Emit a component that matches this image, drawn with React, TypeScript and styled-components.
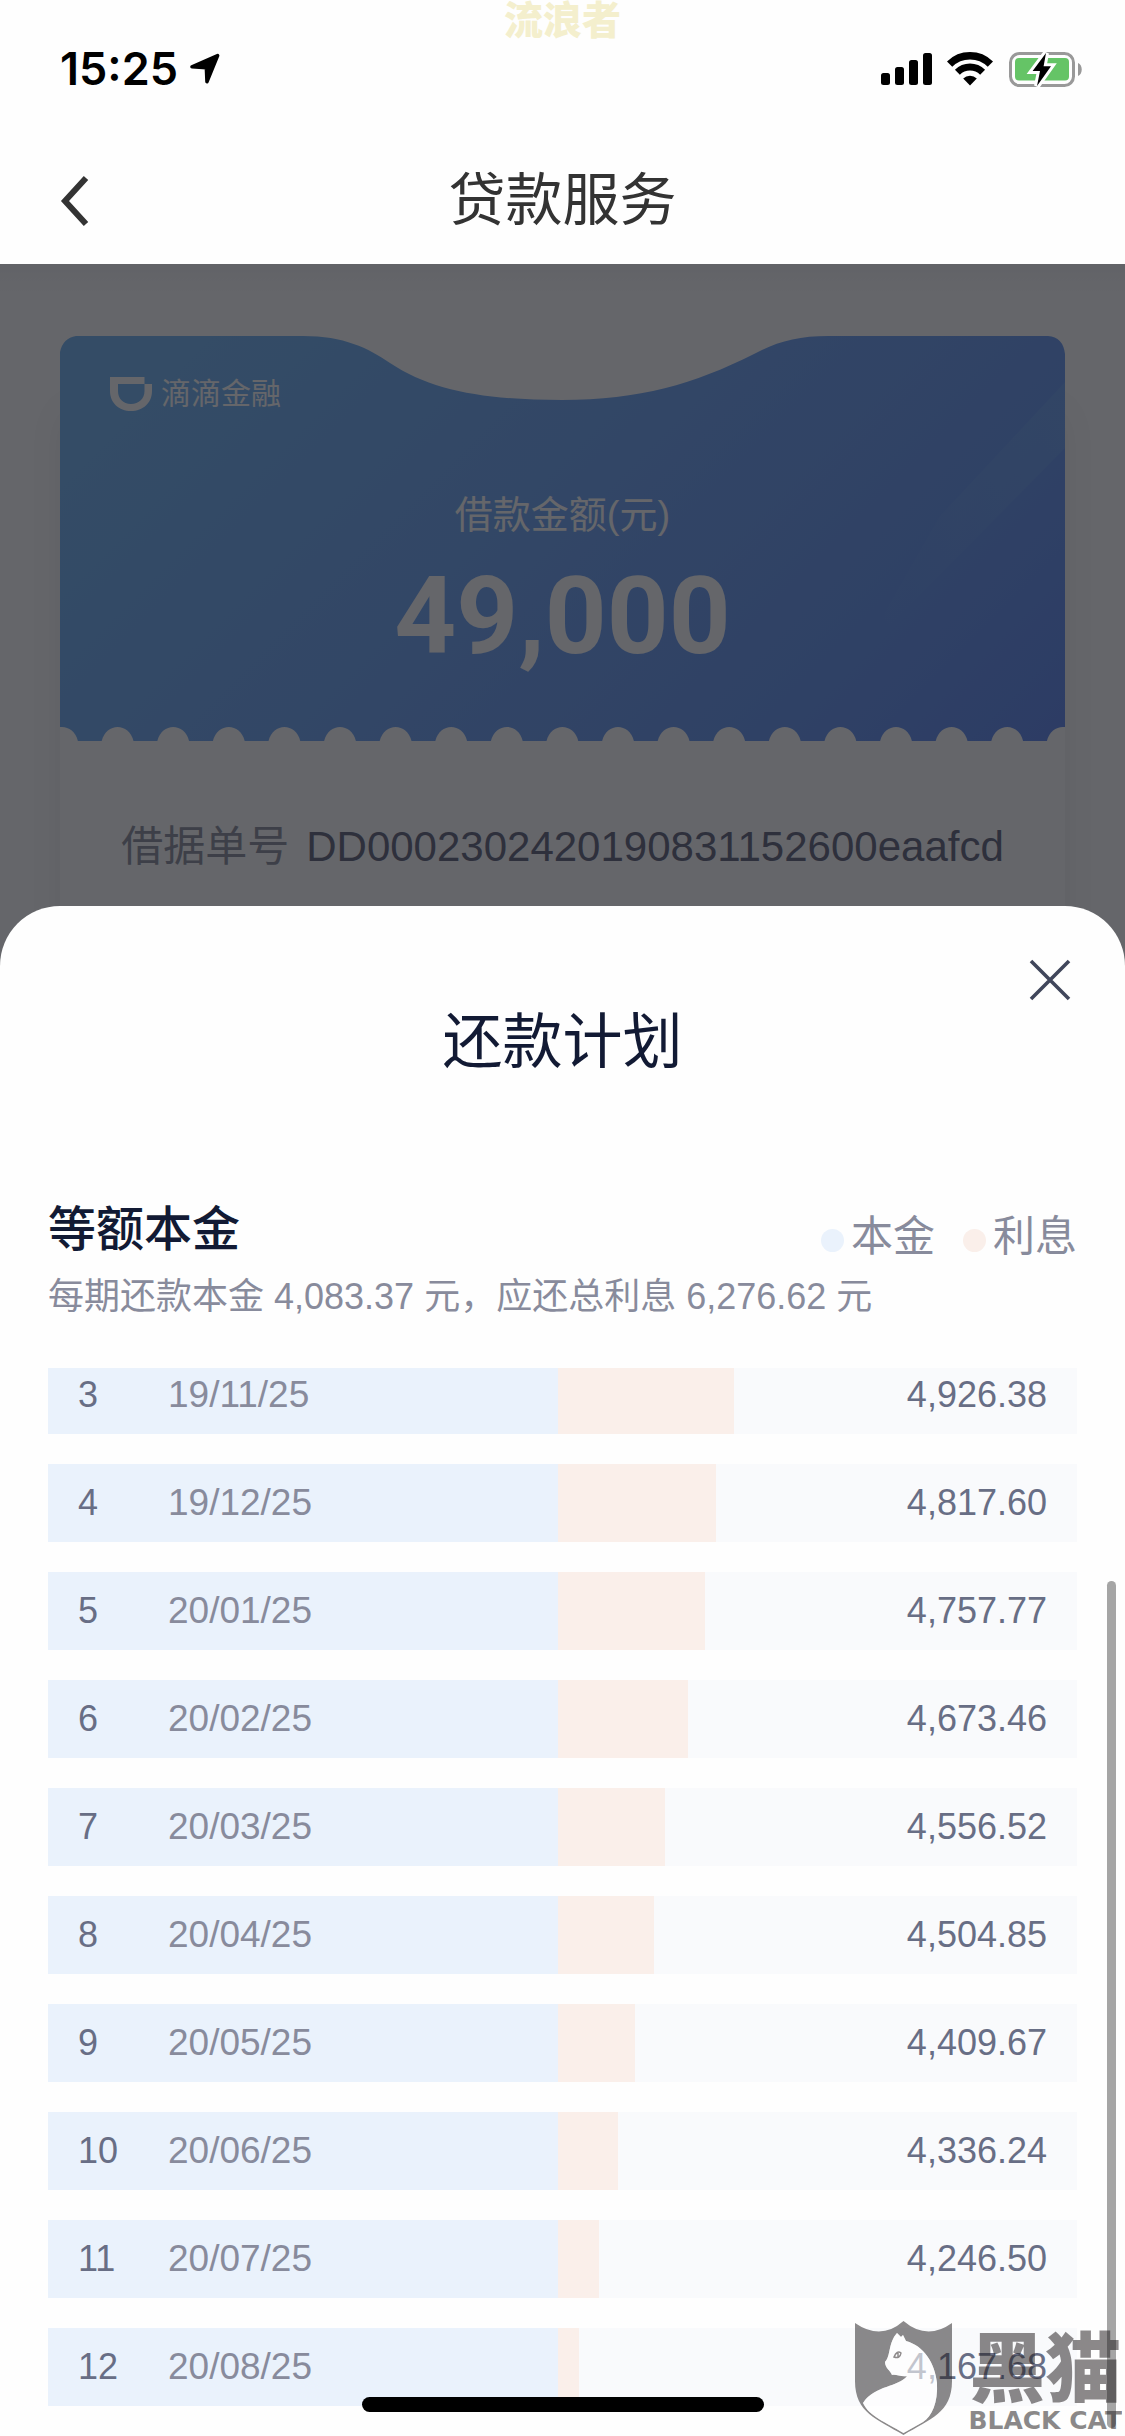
import React from "react";
import styled, { createGlobalStyle } from "styled-components";

const GlobalStyle = createGlobalStyle`
  *, *::before, *::after { box-sizing: border-box; }
  body {
    margin: 0;
    background: #fff;
    font-family: "Liberation Sans", "Noto Sans CJK SC", sans-serif;
  }
  h1, h2, h3, p, dl, dd { margin: 0; font-weight: 400; }
  button { padding: 0; border: 0; background: none; font: inherit; cursor: pointer; }
  svg { display: block; }
`;

const Screen = styled.div`
  position: relative;
  display: flex;
  flex-direction: column;
  min-height: 100vh;
  overflow: hidden;
`;

const Header = styled.header`
  position: relative;
  background: #fefefe;
`;

const UserMark = styled.span`
  position: absolute;
  top: -1px;
  left: 0;
  right: 0;
  text-align: center;
  color: #f4efcd;
  font-family: "Noto Sans CJK SC", sans-serif;
  font-size: 39px;
  font-weight: 900;
  line-height: 36px;
`;

const StatusBar = styled.div`
  display: flex;
  align-items: center;
  justify-content: space-between;
  height: 132px;
  padding: 6px 42px 0 60px;
`;

const StatusGroup = styled.div`
  display: flex;
  align-items: center;
  gap: ${(p: { $gap: number }) => p.$gap}px;
`;

const Clock = styled.span`
  color: #000;
  font-family: Inter, sans-serif;
  font-size: 45px;
  font-weight: 600;
  line-height: 54px;
`;

const NavBar = styled.div`
  display: grid;
  grid-template-columns: 60px 1fr 60px;
  align-items: center;
  height: 132px;
  padding: 4px 60px 0;
`;

const NavTitle = styled.h1`
  text-align: center;
  color: #333;
  font-size: 57px;
  line-height: 80px;
`;

const Stage = styled.main`
  flex: 1;
  display: grid;
  grid-template-columns: minmax(0, 1fr);
`;

const Layer = styled.div`
  grid-area: 1 / 1;
`;

const LoanPage = styled(Layer)`
  padding: 72px 60px 0;
  background: linear-gradient(#f4f4f5, #fcfcfc 28px);
`;

const Backdrop = styled(Layer)`
  background: rgba(0, 2, 8, 0.6);
`;

const LoanCard = styled.section`
  border-radius: 20px;
  box-shadow: 0 72px 36px rgba(0, 0, 0, 0.06);
`;

const Ticket = styled.div`
  display: grid;
`;

const TicketArt = styled.svg`
  grid-area: 1 / 1;
  width: 100%;
  height: 100%;
`;

const TicketFace = styled.div`
  grid-area: 1 / 1;
  display: flex;
  flex-direction: column;
  padding: 36px 50px 70px;
  color: #fcfcfc;
`;

const Brand = styled.div`
  display: flex;
  align-items: center;
  gap: 8px;
  font-size: 30px;
  line-height: 44px;
`;

const LoanLabel = styled.p`
  margin-top: 71px;
  text-align: center;
  font-size: 38px;
  line-height: 56px;
`;

const LoanAmount = styled.p`
  margin-top: 18px;
  text-align: center;
  font-family: Roboto, "Liberation Sans", sans-serif;
  font-size: 108px;
  font-weight: 700;
  line-height: 110px;
`;

const LoanInfo = styled.dl`
  display: flex;
  justify-content: center;
  gap: 17px;
  min-height: 300px;
  padding: 76px 60px;
  background: #fcfcfc;
  font-size: 42px;
  line-height: 60px;
`;

const InfoLabel = styled.dt`
  color: #9a9ca8;
  white-space: nowrap;
`;

const InfoValue = styled.dd`
  color: #73768a;
`;

const Sheet = styled.section`
  position: relative;
  grid-area: 1 / 1;
  align-self: end;
  padding-bottom: 30px;
  border-radius: 60px 60px 0 0;
  background: #fefefe;
`;

const SheetTop = styled.div`
  display: flex;
  justify-content: flex-end;
  padding: 52px 53px 0;
`;

const SheetTitle = styled.h2`
  margin-top: 10px;
  text-align: center;
  color: #121a34;
  font-size: 60px;
  line-height: 62px;
`;

const SheetBody = styled.div`
  padding: 0 48px;
`;

const PlanHead = styled.div`
  display: flex;
  align-items: flex-end;
  justify-content: space-between;
  margin-top: 126px;
`;

const PlanName = styled.h3`
  color: #121a34;
  font-size: 48px;
  font-weight: 500;
  line-height: 60px;
`;

const Legend = styled.div`
  display: flex;
  gap: 28px;
`;

const LegendItem = styled.span`
  display: flex;
  align-items: center;
  gap: 7px;
  color: #888b9c;
  font-size: 42px;
  line-height: 46px;

  &::before {
    content: "";
    width: 23px;
    height: 23px;
    margin-top: 6px;
    border-radius: 50%;
    background: ${(p: { $color: string }) => p.$color};
  }
`;

const PlanSummary = styled.p`
  margin-top: 12px;
  color: #888b9c;
  font-size: 36px;
  line-height: 50px;
`;

const ScheduleView = styled.div`
  margin-top: 46px;
  overflow: hidden;
`;

const Schedule = styled.table`
  display: block;
  margin-top: -12px;
`;

const ScheduleBody = styled.tbody`
  display: flex;
  flex-direction: column;
  gap: 30px;
`;

const PRINCIPAL = "#eaf2fc";
const INTEREST = "#faefea";
const PRINCIPAL_SHARE = 49.6;

const ScheduleRow = styled.tr<{ $interest: number }>`
  display: grid;
  grid-template-columns: 90px 1fr auto;
  align-items: center;
  height: 78px;
  padding: 0 30px;
  background: linear-gradient(
    to right,
    ${PRINCIPAL} 0 ${PRINCIPAL_SHARE}%,
    ${INTEREST} 0 ${(p) => PRINCIPAL_SHARE + p.$interest}%,
    #f9fafc 0
  );
`;

const Cell = styled.td`
  padding: 0;
  color: #686e85;
  font-size: 36px;
  line-height: 42px;
`;

const DateCell = styled(Cell)`
  color: #888b9c;
  font-size: 37px;
`;

const ScrollThumb = styled.div`
  position: absolute;
  top: 675px;
  right: 9px;
  bottom: 8px;
  width: 9px;
  border-radius: 5px;
  background: #a5a5a5;
`;

const HomeIndicator = styled.div`
  position: absolute;
  bottom: 24px;
  left: 50%;
  width: 402px;
  height: 15px;
  margin-left: -201px;
  border-radius: 8px;
  background: #000;
`;

const SourceMark = styled.div`
  position: absolute;
  right: 3px;
  bottom: 0;
  display: flex;
  align-items: flex-end;
  gap: 15px;
  color: #231e20;
`;

const SourceText = styled.div`
  display: flex;
  flex-direction: column;
  align-items: center;
  opacity: 0.52;
`;

const SourceName = styled.span`
  margin-bottom: 4px;
  font-family: "Noto Sans CJK SC", sans-serif;
  font-size: 76px;
  font-weight: 900;
  line-height: 76px;
`;

const SourceLatin = styled.span`
  font-family: "DejaVu Sans", sans-serif;
  font-size: 25px;
  font-weight: 700;
  line-height: 31px;
  white-space: nowrap;
`;

const LocationIcon = () => (
  <svg width="32" height="32" viewBox="0 0 32 32">
    <path d="M3 13.8 L28.6 2.6 L18 28.6 L17.4 14.6 Z" fill="#000" stroke="#000" strokeWidth="3.6" strokeLinejoin="round" />
  </svg>
);

const SignalIcon = () => (
  <svg width="51" height="34" viewBox="0 0 51 34">
    <rect x="0" y="21" width="9" height="12" rx="2.5" />
    <rect x="14" y="15" width="9" height="18" rx="2.5" />
    <rect x="28" y="8" width="9" height="25" rx="2.5" />
    <rect x="42" y="1" width="9" height="32" rx="2.5" />
  </svg>
);

const WifiIcon = () => (
  <svg width="46" height="34" viewBox="0 0 46 34">
    <path d="M2.6 12.2 A29 29 0 0 1 43.4 12.2" fill="none" stroke="#000" strokeWidth="7.5" />
    <path d="M10.4 20.2 A18 18 0 0 1 35.6 20.2" fill="none" stroke="#000" strokeWidth="7" />
    <path d="M23 33.5 L16.2 26.6 A9.6 9.6 0 0 1 29.8 26.6 Z" />
  </svg>
);

const BOLT = "M38 2 L24.6 20 H32 L29 35 L43 15.2 H35.6 Z";

const BatteryIcon = () => (
  <svg width="75" height="37" viewBox="0 0 75 37">
    <rect x="2.5" y="2.5" width="63" height="32" rx="9" fill="none" stroke="#999" strokeWidth="3" />
    <rect x="7" y="7" width="54" height="22.5" rx="4" fill="#65c466" />
    <path d="M70 12 C75 14 75 23 70 25 Z" fill="#999" />
    <path d={BOLT} fill="#fff" stroke="#fff" strokeWidth="6" />
    <path d={BOLT} fill="#000" />
  </svg>
);

const BackIcon = () => (
  <svg width="30" height="54" viewBox="0 0 30 54">
    <path d="M26 5 L5 28 L26 51" fill="none" stroke="#333" strokeWidth="6" />
  </svg>
);

const CloseIcon = () => (
  <svg width="44" height="44" viewBox="0 0 44 44">
    <path d="M3 3 L41 41 M41 3 L3 41" fill="none" stroke="#40465b" strokeWidth="3.6" />
  </svg>
);

const BrandIcon = () => (
  <svg width="43" height="34" viewBox="0 0 43 34">
    <path
      fill="#fcfcfc"
      fillRule="evenodd"
      d="M0 0 H34.5 V7 H42 V14 C42 26 33 34 21 34 C9 34 0 26 0 14 Z M8 7 V14 C8 21.5 13 27 21 27 C29 27 34.5 21.5 34.5 14 V7 Z"
    />
  </svg>
);

const NOTCHES = Array.from({ length: 19 }, (_, i) => 2 + i * 55.6);

const TicketBackground = () => (
  <TicketArt viewBox="0 0 1005 405" preserveAspectRatio="none">
    <defs>
      <linearGradient id="ticket" gradientUnits="userSpaceOnUse" x1="150" y1="0" x2="800" y2="650">
        <stop offset="0" stopColor="#82bbf2" />
        <stop offset="0.45" stopColor="#7dabf2" />
        <stop offset="0.75" stopColor="#76a0f0" />
        <stop offset="1" stopColor="#6f92ee" />
      </linearGradient>
      <linearGradient id="streak" x1="1" y1="0" x2="0" y2="1">
        <stop offset="0.1" stopColor="#9fe0ee" stopOpacity="0.14" />
        <stop offset="0.9" stopColor="#9fe0ee" stopOpacity="0" />
      </linearGradient>
    </defs>
    <path
      fill="url(#ticket)"
      d="M0 16 Q3 2 16 0 H243 C284 0 308 12 330 27 C372 55 426 64 502 64 C580 64 634 48 694 18 C716 6 738 0 768 0 H988 Q1003 1 1005 18 V405 H0 Z"
    />
    <path fill="url(#streak)" d="M1005 46 L880 180 L800 320 L1005 112 Z" />
    {NOTCHES.map((x) => (
      <path key={x} fill="#fcfcfc" d={`M${x - 16} 405.5 C${x - 12} 386 ${x + 12} 386 ${x + 16} 405.5 Z`} />
    ))}
  </TicketArt>
);

const ShieldIcon = () => (
  <svg width="98" height="115" viewBox="0 0 98 115">
    <path
      fill="#231e20"
      fillOpacity="0.52"
      fillRule="evenodd"
      d="M0 2 Q26 20 48.5 0 Q72 20 97 2 V60 C97 92 75 98 48.5 114 C22 98 0 92 0 60 Z M42 12 C33 22 36 35 30 41 C30 47 35 49 37 54 C41 53 46 56 52 55 C44 66 20 64 8 82 C14 95 30 101 48.5 112 L68 101 C77 95 83 82 82 62 C80 42 69 25 51 20 L48 14 L46 16 Z"
    />
    <path
      fill="#fff"
      fillOpacity="0.6"
      d="M42 12 C33 22 36 35 30 41 C30 47 35 49 37 54 C41 53 46 56 52 55 C44 66 20 64 8 82 C14 95 30 101 48.5 112 L68 101 C77 95 83 82 82 62 C80 42 69 25 51 20 L48 14 L46 16 Z"
    />
    <path d="M39 36 Q42 29 46 32 Q45 38 39 36 Z M43 32 V36" fill="none" stroke="#8f8b8c" strokeWidth="1.5" />
  </svg>
);

const ROWS = [
  { no: 3, date: "19/11/25", amount: "4,926.38", interest: 17.1 },
  { no: 4, date: "19/12/25", amount: "4,817.60", interest: 15.3 },
  { no: 5, date: "20/01/25", amount: "4,757.77", interest: 14.2 },
  { no: 6, date: "20/02/25", amount: "4,673.46", interest: 12.6 },
  { no: 7, date: "20/03/25", amount: "4,556.52", interest: 10.4 },
  { no: 8, date: "20/04/25", amount: "4,504.85", interest: 9.3 },
  { no: 9, date: "20/05/25", amount: "4,409.67", interest: 7.4 },
  { no: 10, date: "20/06/25", amount: "4,336.24", interest: 5.8 },
  { no: 11, date: "20/07/25", amount: "4,246.50", interest: 3.9 },
  { no: 12, date: "20/08/25", amount: "4,167.68", interest: 2.0 },
];

export default function App() {
  return (
    <Screen>
      <GlobalStyle />
      <Header>
        <StatusBar>
          <StatusGroup $gap={11}>
            <Clock>15:25</Clock>
            <LocationIcon />
          </StatusGroup>
          <StatusGroup $gap={15}>
            <SignalIcon />
            <WifiIcon />
            <BatteryIcon />
          </StatusGroup>
        </StatusBar>
        <NavBar>
          <button type="button" aria-label="返回">
            <BackIcon />
          </button>
          <NavTitle>贷款服务</NavTitle>
        </NavBar>
        <UserMark>流浪者</UserMark>
      </Header>

      <Stage>
        <LoanPage>
          <LoanCard>
            <Ticket>
              <TicketBackground />
              <TicketFace>
                <Brand>
                  <BrandIcon />
                  滴滴金融
                </Brand>
                <LoanLabel>借款金额(元)</LoanLabel>
                <LoanAmount>49,000</LoanAmount>
              </TicketFace>
            </Ticket>
            <LoanInfo>
              <InfoLabel>借据单号</InfoLabel>
              <InfoValue>DD0002302420190831152600eaafcd</InfoValue>
            </LoanInfo>
          </LoanCard>
        </LoanPage>

        <Backdrop />

        <Sheet role="dialog" aria-labelledby="plan-title">
          <SheetTop>
            <button type="button" aria-label="关闭">
              <CloseIcon />
            </button>
          </SheetTop>
          <SheetTitle id="plan-title">还款计划</SheetTitle>
          <SheetBody>
            <PlanHead>
              <PlanName>等额本金</PlanName>
              <Legend>
                <LegendItem $color={PRINCIPAL}>本金</LegendItem>
                <LegendItem $color={INTEREST}>利息</LegendItem>
              </Legend>
            </PlanHead>
            <PlanSummary>每期还款本金 4,083.37 元，应还总利息 6,276.62 元</PlanSummary>
            <ScheduleView>
              <Schedule>
                <ScheduleBody>
                  {ROWS.map((row) => (
                    <ScheduleRow key={row.no} $interest={row.interest}>
                      <Cell>{row.no}</Cell>
                      <DateCell>{row.date}</DateCell>
                      <Cell>{row.amount}</Cell>
                    </ScheduleRow>
                  ))}
                </ScheduleBody>
              </Schedule>
            </ScheduleView>
          </SheetBody>
          <ScrollThumb />
        </Sheet>
      </Stage>

      <HomeIndicator />
      <SourceMark>
        <ShieldIcon />
        <SourceText>
          <SourceName>黑猫</SourceName>
          <SourceLatin>BLACK CAT</SourceLatin>
        </SourceText>
      </SourceMark>
    </Screen>
  );
}
